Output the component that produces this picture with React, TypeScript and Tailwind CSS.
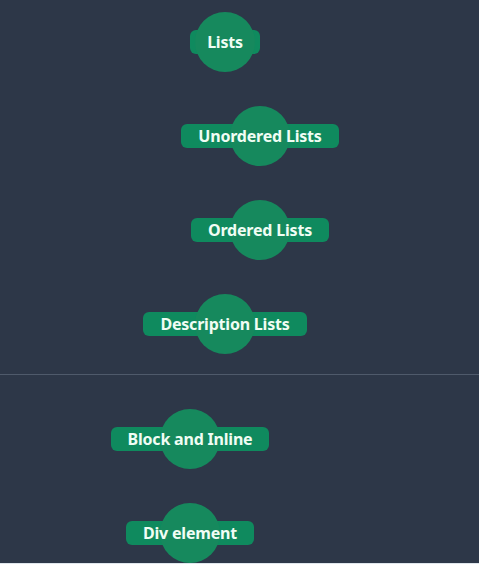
import React from "react";

type Node = { label: string; shift: string };

const topNodes: Node[] = [
  { label: "Lists", shift: "pr-[29px]" },
  { label: "Unordered Lists", shift: "pl-[41px]" },
  { label: "Ordered Lists", shift: "pl-[41px]" },
  { label: "Description Lists", shift: "pr-[29px]" },
];

const bottomNodes: Node[] = [
  { label: "Block and Inline", shift: "pr-[99px]" },
  { label: "Div element", shift: "pr-[99px]" },
];

function TopicNode({ label, shift }: Node) {
  return (
    <div className={`flex justify-center ${shift}`}>
      <div className="grid place-items-center">
        <div className="[grid-area:1/1] h-6 rounded-md bg-[#0f8a5e] px-[17px] flex items-center">
          <span className="relative z-10 text-[16px] font-bold leading-none tracking-[-0.2px] text-[#f0fdf4] whitespace-nowrap">
            {label}
          </span>
        </div>
        <div className="[grid-area:1/1] h-[60px] w-[60px] rounded-full bg-[#16895d]" />
      </div>
    </div>
  );
}

export default function App() {
  return (
    <div
      className="h-[564px] w-[479px] overflow-hidden bg-[#2d3748] flex flex-col"
      style={{ fontFamily: '"Noto Sans", "Open Sans", sans-serif' }}
    >
      <div className="flex flex-col gap-[34px] pt-3">
        {topNodes.map((n) => (
          <TopicNode key={n.label} {...n} />
        ))}
      </div>
      <div className="mt-5 h-px bg-[#4f5a6b]" />
      <div className="flex flex-col gap-[34px] pt-[35px]">
        {bottomNodes.map((n) => (
          <TopicNode key={n.label} {...n} />
        ))}
      </div>
      <div className="mt-auto h-[2px] bg-[#dfe6ec]" />
    </div>
  );
}
